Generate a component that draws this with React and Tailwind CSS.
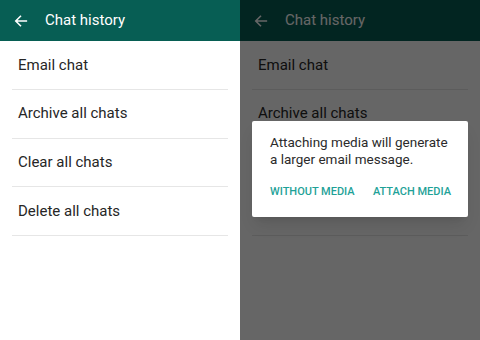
import React from "react";

const items = ["Email chat", "Archive all chats", "Clear all chats", "Delete all chats"];

const BackArrow = () => (
  <svg width="14" height="14" viewBox="0 0 16 16" fill="none" stroke="currentColor" strokeWidth="1.8">
    <path d="M15 8H2M8 2L2 8l6 6" />
  </svg>
);

const Screen = ({ children }) => (
  <div className="relative w-[240px] h-[340px] bg-white overflow-hidden">
    {/* Toolbar */}
    <header className="h-[41px] bg-[#075e54] text-white flex items-center">
      <span className="pl-[14px] w-[45px] flex items-center">
        <BackArrow />
      </span>
      <h1 className="text-[15px] leading-none">Chat history</h1>
    </header>

    {/* Settings list */}
    <ul className="px-3">
      {items.map((label) => (
        <li
          key={label}
          className="h-[48.75px] flex items-center px-[6px] border-b border-[#e6e6e6] text-[15px] text-[#262626]"
        >
          {label}
        </li>
      ))}
    </ul>

    {children}
  </div>
);

export default function App() {
  return (
    <div className="flex w-[480px] h-[340px] font-['Roboto',sans-serif]">
      <Screen />
      <Screen>
        {/* Dim overlay */}
        <div className="absolute inset-0 bg-black/60" />
        {/* Dialog */}
        <div className="absolute left-[12px] top-[121px] w-[216px] h-[96px] bg-white rounded-[2px] shadow-lg pl-[18px] pr-[14px] pt-[13px]">
          <div className="text-[13.5px] leading-[17px] text-[#2b2b2b] whitespace-nowrap">
            <p>Attaching media will generate</p>
            <p>a larger email message.</p>
          </div>
          <div className="flex justify-between mt-[17px] pr-[3px] text-[11px] leading-[13px] font-medium text-[#1fa298]">
            <button>WITHOUT MEDIA</button>
            <button>ATTACH MEDIA</button>
          </div>
        </div>
      </Screen>
    </div>
  );
}
